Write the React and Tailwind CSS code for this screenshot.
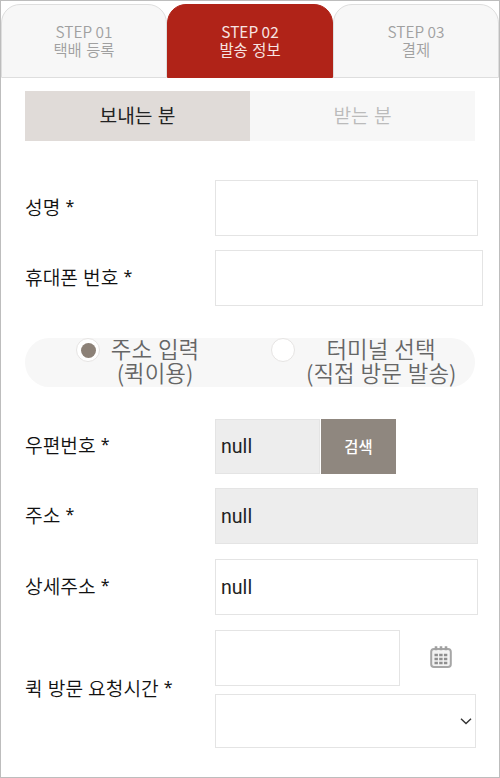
import React from "react";

const KR = "font-['Noto_Sans_CJK_KR','Noto_Sans',sans-serif]";

function Step({ step, label, active }) {
  return (
    <div
      className={
        "flex flex-1 flex-col items-center rounded-t-[19px] border pt-[17px] text-[15.4px] leading-[18px] " +
        (active
          ? "border-[#b02318] bg-[#b02318] font-normal text-[#f7e4e2]"
          : "border-[#dedede] bg-[#f7f7f7] font-[350] text-[#a0a0a0]")
      }
    >
      <span className="whitespace-nowrap">{step}</span>
      <span className="whitespace-nowrap [word-spacing:1px]">{label}</span>
    </div>
  );
}

function Row({ label, className = "", children }) {
  return (
    <div className={"flex items-center " + className}>
      <div className="w-[190px] shrink-0 whitespace-nowrap pb-[3px] text-[19.2px] font-[350] leading-6 text-[#111] [word-spacing:0.8px]">
        {label} <span className="align-[3px] font-['Noto_Sans',sans-serif] text-[16px] font-normal leading-none">*</span>
      </div>
      {children}
    </div>
  );
}

function Field({ className = "", height = "h-14", value }) {
  return (
    <div
      className={
        "flex shrink-0 items-center border border-[#e4e4e4] pl-[5px] pt-[1px] font-['Roboto','Noto_Sans_CJK_KR',sans-serif] text-[19.6px] text-[#222] " +
        height +
        " " +
        className
      }
    >
      {value}
    </div>
  );
}

function CalendarIcon() {
  return (
    <svg className="mb-[2px] ml-[30px] h-[22px] w-[22px]" viewBox="0 0 22 22" fill="none">
      <rect x="1.2" y="3" width="19.6" height="18" rx="2.8" fill="#f3f3f3" stroke="#a6a6a6" strokeWidth="2" />
      <path d="M6 0.3v4M11 0.3v4M16 0.3v4" stroke="#a0a0a0" strokeWidth="2.6" />
      <path
        d="M4.5 9h3.4M9.2 9h3.4M13.9 9h3.4M4.5 13h3.4M9.2 13h3.4M13.9 13h3.4M4.5 17h3.4M9.2 17h3.4M13.9 17h3.4"
        stroke="#8e8e8e"
        strokeWidth="2.6"
      />
    </svg>
  );
}

function Radio({ checked }) {
  return (
    <span className="flex h-6 w-6 shrink-0 items-center justify-center rounded-full border border-[#e6e4e3] bg-white">
      {checked && <span className="h-[15px] w-[15px] rounded-full bg-[#8c8177]" />}
    </span>
  );
}

export default function App() {
  return (
    <div className={"flex h-[778px] w-[500px] flex-col border border-[#bdbdbd] bg-white " + KR}>
      <div className="mt-[3px] flex h-[74px]">
        <Step step="STEP 01" label="택배 등록" />
        <Step step="STEP 02" label="발송 정보" active />
        <Step step="STEP 03" label="결제" />
      </div>

      <div className="ml-6 mt-[13px] flex h-[50px] w-[450px] text-[19.2px] [word-spacing:1px]">
        <div className="flex flex-1 items-center justify-center bg-[#e0dbd8] pb-[1px] text-[#222]">보내는 분</div>
        <div className="flex flex-1 items-center justify-center bg-[#f7f7f7] pb-[1px] font-[350] text-[#bbb]">받는 분</div>
      </div>

      <div className="ml-6 mt-[39px] flex flex-col">
        <Row label="성명">
          <Field className="w-[263px]" />
        </Row>
        <Row label="휴대폰 번호" className="mt-[14px]">
          <Field className="w-[268px]" />
        </Row>

        <div className="mt-8 flex h-[49px] w-[450px] rounded-full bg-[#f7f7f7] text-center text-[22.4px] font-[350] leading-6 text-[#666] [word-spacing:1px]">
          <div className="ml-[51px] flex w-[124px] shrink-0">
            <Radio checked />
            <div className="-mt-[2px] ml-[10px] w-[98px] whitespace-nowrap">
              주소 입력
              <br />
              (퀵이용)
            </div>
          </div>
          <div className="ml-[71px] flex shrink-0">
            <Radio />
            <div className="-mt-[2px] ml-[11px] w-[150px] whitespace-nowrap">
              터미널 선택
              <br />
              (직접 방문 발송)
            </div>
          </div>
        </div>

        <Row label="우편번호" className="mt-8">
          <Field className="w-[105px] bg-[#ededed]" height="h-[55px]" value="null" />
          <div className="ml-px flex h-[55px] w-[75px] items-center justify-center bg-[#8f877f] text-[15.4px] font-medium text-white">
            검색
          </div>
        </Row>
        <Row label="주소" className="mt-[14px]">
          <Field className="w-[263px] bg-[#ededed]" value="null" />
        </Row>
        <Row label="상세주소" className="mt-[15px]">
          <Field className="w-[263px]" value="null" />
        </Row>
        <Row label="퀵 방문 요청시간" className="mt-[15px]">
          <div className="flex flex-col gap-2">
            <div className="flex items-center">
              <Field className="w-[185px]" />
              <CalendarIcon />
            </div>
            <div className="flex h-[54px] w-[261px] items-center justify-end border border-[#e4e4e4] pr-[3px]">
              <svg className="h-3 w-3" viewBox="0 0 12 12" fill="none">
                <path d="M1 3.8l5 4.8 5-4.8" stroke="#333" strokeWidth="1.4" />
              </svg>
            </div>
          </div>
        </Row>
      </div>
    </div>
  );
}
